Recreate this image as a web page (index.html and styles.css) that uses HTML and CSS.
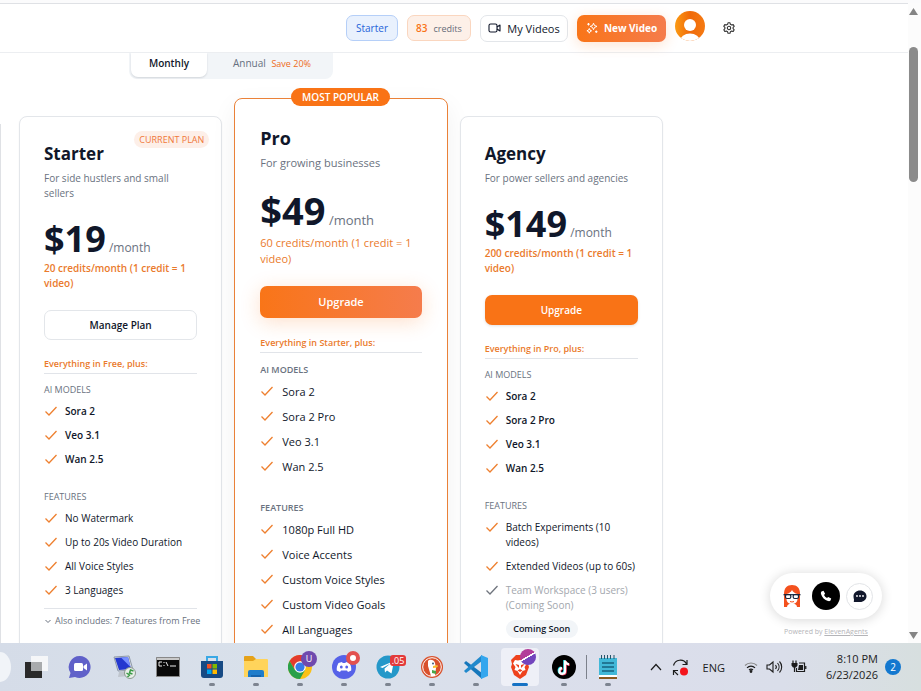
FILE: index.html
```html
<!DOCTYPE html>
<html lang="en">
<head>
<meta charset="utf-8">
<meta name="viewport" content="width=device-width, initial-scale=1">
<title>Plans</title>
<link rel="stylesheet" href="styles.css">
</head>
<body>
<svg class="defs" aria-hidden="true">
  <symbol id="check" viewBox="0 0 14 14"><path d="M1.5 7.5 5 11 12.5 3" fill="none" stroke="currentColor" stroke-width="1.3"/></symbol>
</svg>
<div class="screen">
  <div class="page">
    <div class="view">
      <header class="header">
        <nav class="header-inner">
          <a class="pill pill-plan" href="#">Starter</a>
          <span class="pill pill-credits"><b>83</b> <small>credits</small></span>
          <button class="btn btn-videos" type="button">
            <svg width="13" height="12" viewBox="0 0 13 12" fill="none" stroke="currentColor" stroke-width="1.1" stroke-linejoin="round"><rect x="1" y="2" width="8" height="8" rx="1.6"/><path d="M9 5l3-2v6L9 7"/></svg>
            My Videos</button>
          <button class="btn btn-new" type="button">
            <svg width="12" height="12" viewBox="0 0 12 12" fill="none" stroke="currentColor" stroke-width="1" stroke-linejoin="round"><path d="M7.5 1.2l1 2.3 2.500.9-2.500 1-1 2.300-1-2.300-2.300-1 2.300-.9zM3.300 6.500l.7 1.600 1.600.7-1.600.7-.7 1.700-.7-1.700-1.700-.7 1.700-.7zM2.500 1v2.500M1.200 2.200h2.600M10.300 8.500v2.500M9 9.700h2.500"/></svg>
            New Video</button>
          <button class="avatar" type="button" aria-label="Account">
            <svg width="30" height="30" viewBox="0 0 30 30"><defs><linearGradient id="av" x1="0" x2="1"><stop offset="0" stop-color="#fb9a12"/><stop offset=".5" stop-color="#f06a0a"/><stop offset="1" stop-color="#f57a12"/></linearGradient><clipPath id="ac"><circle cx="15" cy="15" r="15"/></clipPath></defs><g clip-path="url(#ac)"><path fill="url(#av)" d="M0 0h30v30H0z"/><circle cx="15" cy="14" r="6" fill="#fff"/><ellipse cx="15" cy="30" rx="10" ry="7.500" fill="#fff"/></g></svg>
          </button>
          <button class="gear" type="button" aria-label="Settings">
            <svg width="12" height="12" viewBox="0 0 12 12" fill="none" stroke="currentColor" stroke-width="1.100" stroke-linejoin="round"><path d="M5 .8h2l.4 1.500 1.300.7 1.500-.4 1 1.700L10.100 5.400v1.300l1.100 1.100-1 1.700-1.500-.4-1.300.7L7 11.300H5l-.4-1.500-1.300-.7-1.500.4-1-1.700 1.100-1.100V5.400L.8 4.300l1-1.700 1.500.4 1.300-.7z"/><circle cx="6" cy="6" r="1.700"/></svg>
          </button>
        </nav>
      </header>

      <main class="content">
        <div class="cycle">
          <button class="cycle-btn cycle-on" type="button">Monthly</button>
          <button class="cycle-btn" type="button">Annual <small>Save 20%</small></button>
        </div>

        <div class="plans">
          <section class="card">
            <span class="current">CURRENT PLAN</span>
            <h2>Starter</h2>
            <p class="desc">For side hustlers and small<br>sellers</p>
            <p class="price"><strong>$19</strong> /month</p>
            <p class="credits">20 credits/month (1 credit = 1<br>video)</p>
            <button class="cta cta-plain" type="button">Manage Plan</button>
            <p class="inherits">Everything in Free, plus:</p>
            <h3>AI MODELS</h3>
            <ul class="models">
              <li><svg><use href="#check"/></svg>Sora 2</li>
              <li><svg><use href="#check"/></svg>Veo 3.1</li>
              <li><svg><use href="#check"/></svg>Wan 2.5</li>
            </ul>
            <h3>FEATURES</h3>
            <ul>
              <li><svg><use href="#check"/></svg>No Watermark</li>
              <li><svg><use href="#check"/></svg>Up to 20s Video Duration</li>
              <li><svg><use href="#check"/></svg>All Voice Styles</li>
              <li><svg><use href="#check"/></svg>3 Languages</li>
            </ul>
            <button class="also" type="button"><svg width="8" height="8" viewBox="0 0 8 8"><path d="M1.500 3 4 5.500 6.500 3" fill="none" stroke="currentColor"/></svg>Also includes: 7 features from Free</button>
          </section>

          <section class="card card-pro">
            <span class="popular">MOST POPULAR</span>
            <h2>Pro</h2>
            <p class="desc">For growing businesses</p>
            <p class="price"><strong>$49</strong> /month</p>
            <p class="credits">60 credits/month (1 credit = 1<br>video)</p>
            <button class="cta cta-glow" type="button">Upgrade</button>
            <p class="inherits">Everything in Starter, plus:</p>
            <h3>AI MODELS</h3>
            <ul class="models">
              <li><svg><use href="#check"/></svg>Sora 2</li>
              <li><svg><use href="#check"/></svg>Sora 2 Pro</li>
              <li><svg><use href="#check"/></svg>Veo 3.1</li>
              <li><svg><use href="#check"/></svg>Wan 2.5</li>
            </ul>
            <h3>FEATURES</h3>
            <ul>
              <li><svg><use href="#check"/></svg>1080p Full HD</li>
              <li><svg><use href="#check"/></svg>Voice Accents</li>
              <li><svg><use href="#check"/></svg>Custom Voice Styles</li>
              <li><svg><use href="#check"/></svg>Custom Video Goals</li>
              <li><svg><use href="#check"/></svg>All Languages</li>
            </ul>
          </section>

          <section class="card">
            <h2>Agency</h2>
            <p class="desc">For power sellers and agencies</p>
            <p class="price"><strong>$149</strong> /month</p>
            <p class="credits">200 credits/month (1 credit = 1<br>video)</p>
            <button class="cta" type="button">Upgrade</button>
            <p class="inherits">Everything in Pro, plus:</p>
            <h3>AI MODELS</h3>
            <ul class="models">
              <li><svg><use href="#check"/></svg>Sora 2</li>
              <li><svg><use href="#check"/></svg>Sora 2 Pro</li>
              <li><svg><use href="#check"/></svg>Veo 3.1</li>
              <li><svg><use href="#check"/></svg>Wan 2.5</li>
            </ul>
            <h3>FEATURES</h3>
            <ul>
              <li><svg><use href="#check"/></svg><span>Batch Experiments (10<br>videos)</span></li>
              <li><svg><use href="#check"/></svg>Extended Videos (up to 60s)</li>
              <li class="soon"><svg><use href="#check"/></svg><span>Team Workspace (3 users)<br>(Coming Soon)<em>Coming Soon</em></span></li>
            </ul>
          </section>
        </div>
      </main>

      <aside class="widget">
        <div class="widget-bar">
          <svg width="24" height="24" viewBox="0 0 24 24"><path fill="#f4511e" d="M4 23V10C4 4 7 1 12 1s8 3 8 9v13z"/><path fill="#fff" d="M6.500 10c2.500-.5 4.500-2 5.500-4 1 2 3 3.500 5.500 4v5c0 3-2.500 5-5.500 5s-5.500-2-5.500-5zM7 23c0-2 2-3.500 5-3.500s5 1.500 5 3.500z"/><g fill="#fff" stroke="#15233a" stroke-width="1.200"><rect x="5.500" y="10.500" width="5.300" height="4" rx="1.500"/><rect x="13.200" y="10.500" width="5.300" height="4" rx="1.500"/></g><path d="M3.500 10.700h17" stroke="#15233a" stroke-width="1.200"/><path d="M10 17.500q2 1 4 0" fill="none" stroke="#f4511e"/></svg>
          <button class="call" type="button" aria-label="Call"><svg width="12" height="12" viewBox="0 0 12 12"><path fill="#fff" d="M1.500 1.500 3.500.8l1.600 3L4 5c.6 1.300 1.600 2.300 3 3l1.200-1.100 3 1.600-.7 2c-.5.6-1.500.8-2.500.5C4.600 10.200 1.900 7.300 1 4c-.2-1 0-2 .5-2.500z"/></svg></button>
          <button class="chat" type="button" aria-label="Chat"><svg width="14" height="13" viewBox="0 0 14 13"><path fill="#11172b" d="M7 .5c3.700 0 6.500 2.500 6.500 5.700S10.700 12 7 12H.8l.2-2.500C.7 8.500.5 7.600.5 6.200.5 3 3.300.5 7 .5z"/><g fill="#fff"><circle cx="4" cy="6" r=".9"/><circle cx="7" cy="6" r=".9"/><circle cx="10" cy="6" r=".9"/></g></svg></button>
        </div>
        <p>Powered by <a href="#">ElevenAgents</a></p>
      </aside>
    </div>
    <div class="scroll" aria-hidden="true">
      <svg width="9" height="7" viewBox="0 0 9 7"><path d="M4.500 0 9 7H0z"/></svg>
      <div class="thumb"></div>
      <svg class="down" width="9" height="7" viewBox="0 0 9 7"><path d="M4.500 7 9 0H0z"/></svg>
    </div>
  </div>

  <footer class="taskbar">
    <span class="search"></span>
    <div class="apps">
      <button type="button" aria-label="Task view"><svg viewBox="0 0 24 24"><path fill="#f5f6f8" d="M7 1h17v15H7z"/><path fill="#2a2a2a" d="M1 7h17v16H1z"/><path fill="#a9abad" d="M7 7h11v9H7z"/></svg></button>
      <button type="button" aria-label="Chat"><svg viewBox="0 0 24 24"><path fill="#6061c9" d="M12 1a11 11 0 1 1-5 21l-6 1 1.500-5A11 11 0 0 1 12 1z"/><rect x="6" y="8" width="9" height="8" rx="1.500" fill="#fff"/><path fill="#fff" d="m15.500 11 3.500-2.500v7L15.500 13z"/></svg></button>
      <button type="button" aria-label="Remote desktop"><svg viewBox="0 0 24 24"><path fill="#d5d9de" stroke="#8e99a8" d="m2 2 15-1 4 14-15 1z"/><path fill="#2438cf" d="m3 3 13-1 3 12-12 1z"/><path fill="#7890ff" d="m9 2.500 7-.5 2.500 10z"/><path fill="#bfc5cd" d="m7 17 7-1 3 5-11 1z"/><circle cx="18" cy="18" r="5.500" fill="#e8eee9" stroke="#8c9a90"/><path d="m14.500 18 3 2-2 2M21.500 16l-3-1-1 3 3 1" fill="none" stroke="#3a9a45" stroke-width="1.500"/></svg></button>
      <button type="button" aria-label="Command prompt"><svg viewBox="0 0 24 24"><path fill="#090909" stroke="#888" d="M.5 2.500h23v19H.5z"/><path fill="#c9c9c9" d="M1 3h22v2H1z"/><path d="M6 7H3v4h3M8 7v1M8 10v1M10 7l2 4M14 11h6" stroke="#eee" fill="none"/></svg></button>
      <button class="open" type="button" aria-label="Store"><svg viewBox="0 0 24 24"><path d="M7 7V2h10v5" fill="none" stroke="#39a8e5" stroke-width="2"/><path fill="#174a84" d="M1 6h22v14q0 3-3 3H4q-3 0-3-3z"/><path fill="#f25022" d="M7 9h4.500v4.500H7z"/><path fill="#7fba00" d="M12.500 9H17v4.500h-4.500z"/><path fill="#00a4ef" d="M7 14.500h4.500V19H7z"/><path fill="#ffb900" d="M12.500 14.500H17V19h-4.500z"/></svg></button>
      <button class="open" type="button" aria-label="Files"><svg viewBox="0 0 24 24"><path fill="#e5a219" d="M0 2q0-1 1-1h8l3 3v5H0z"/><path fill="#ffd45b" d="M0 6h9l3-2h11q1 0 1 1v17H0z"/><path fill="#1f7dcb" d="M4 22v-5q0-2 2-2h12q2 0 2 2v5z"/><path fill="#1764ad" d="M7 20h10v2H7z"/></svg></button>
      <button class="open" type="button" aria-label="Chrome"><svg viewBox="0 0 24 24"><circle cx="12" cy="12" r="12" fill="#fbc116"/><path fill="#e33b2e" d="M1.600 6A12 12 0 0 1 22.400 6H12L7 15z"/><path fill="#29a04a" d="M1.600 6A12 12 0 0 0 12 24l5-9-10 0z"/><circle cx="12" cy="12" r="5.800" fill="#fff"/><circle cx="12" cy="12" r="4.600" fill="#377be8"/></svg><i class="badge badge-u">U</i></button>
      <button class="open" type="button" aria-label="Discord"><svg viewBox="0 0 24 24"><circle cx="12" cy="12" r="12" fill="#5662e8"/><path fill="#fff" d="M6.500 8 10 7l.7 1h2.600L14 7l3.500 1c1.500 2.500 2 5 1.700 7.500L16 17l-1-1.500H9L8 17l-3.200-1.500C4.500 13 5 10.500 6.500 8z"/><ellipse cx="9.300" cy="12" rx="1.400" ry="1.600" fill="#5662e8"/><ellipse cx="14.700" cy="12" rx="1.400" ry="1.600" fill="#5662e8"/></svg><i class="badge badge-dot"></i></button>
      <button class="open" type="button" aria-label="Telegram"><svg viewBox="0 0 24 24"><circle cx="12" cy="12" r="11.500" fill="#2598c9"/><path fill="#fff" d="m4 12 14-6-2.500 12.500-4.500-3-2 2-.5-4 6-5-8 4.500z"/></svg><i class="badge badge-count">.05</i></button>
      <button class="open" type="button" aria-label="DuckDuckGo"><svg viewBox="0 0 24 24"><circle cx="12" cy="12" r="11" fill="#d9512c"/><circle cx="12" cy="12" r="9.300" fill="none" stroke="#fff"/><path fill="#fff" d="M8 6c1-2 6-2 7 2l1 5-1 8h-4L8 11z"/><path fill="#f8bd2e" d="M13 11c3-1 5-1 5 0s-2 2-5 2z"/><path fill="#4ba64a" d="m12 15 4 1v3l-4-1z"/><circle cx="13" cy="8.500" r=".9" fill="#2b4b6b"/></svg></button>
      <button class="open" type="button" aria-label="Code"><svg viewBox="0 0 24 24"><path fill="#1677bb" d="M0 8 2 6l16 12v6L1 9z"/><path fill="#2189cc" d="m0 16 2 2L18 6V0L1 15z"/><path fill="#34a6ee" d="m17 0 7 3v18l-7 3z"/></svg></button>
      <button class="open active" type="button" aria-label="Brave"><svg viewBox="0 0 24 24"><path fill="#ee421d" d="m5 3 3-3h8l3 3 2 2-1 4 1 3-3 8-6 4-6-4-3-8 1-3-1-4z"/><path fill="#fff" d="m7 5 3 .5L12 5l2 .5L17 5l2 3.500-2.500 3.500 1 3-3 1-2.500 4-2.500-4-3-1 1-3L5 8.500z"/><path fill="#ee421d" d="m7.500 9 3.500 1v3l-2-2zM16.500 9 13 10v3l2-2zM9.500 15.500l2.500-1.500 2.500 1.500L12 17z"/></svg><i class="badge badge-brave"></i></button>
      <button class="open" type="button" aria-label="TikTok"><svg viewBox="0 0 24 24"><circle cx="12" cy="12" r="12" fill="#000"/><g fill="none" stroke-width="2.200"><path stroke="#25dfe5" d="M12.300 5v10.500a2.800 2.800 0 1 1-3-2.800M12.300 5.500c.5 2 2 3 4 3.300"/><path stroke="#f5365c" d="M13.700 6v10.500a2.800 2.800 0 1 1-3-2.800M13.700 6.500c.5 2 2 3 4 3.300"/><path stroke="#fff" d="M13 5.500V16a2.800 2.800 0 1 1-3-2.800M13 6c.5 2 2 3 4 3.300"/></g></svg></button>
      <button class="open divided" type="button" aria-label="Notepad"><svg viewBox="0 0 24 24"><path fill="#42b8d8" d="M3 3h18v18H3z"/><path fill="#fff" d="M3 20h18v2H3z"/><path fill="#8a5a20" d="M3 22h18v2H3z"/><path d="M6 8h12M6 12h12M6 16h12" stroke="#17627f" stroke-width="1.500"/><path d="M5.500 0v4M8.500 0v4M11.500 0v4M14.500 0v4M18 0v4" stroke="#27576b"/></svg></button>
    </div>
    <div class="tray">
      <svg width="12" height="8" viewBox="0 0 12 8" fill="none" stroke="#1c1c1c" stroke-width="1.200"><path d="M1 7l5-5.500L11 7"/></svg>
      <svg class="sync" width="17" height="17" viewBox="0 0 17 17" fill="none" stroke="#1c1c1c" stroke-width="1.200"><path d="M1.500 6.500A7 7 0 0 1 14.500 5M15 1v4.500h-4.500M1.500 16v-4.500H6M1.800 11.800 6 16"/><circle cx="12" cy="12.500" r="4" fill="#f4141c" stroke="none"/></svg>
      <span class="lang">ENG</span>
      <svg class="wifi" width="14" height="12" viewBox="0 0 14 12" fill="none" stroke="#1c1c1c" stroke-width="1.200"><path d="M1 4.500a8.500 8.500 0 0 1 12 0" stroke="#888"/><path d="M3 6.800a5.600 5.600 0 0 1 8 0M5 9a2.900 2.900 0 0 1 4 0"/><circle cx="7" cy="10.500" r=".8" fill="#1c1c1c"/></svg>
      <svg class="sound" width="17" height="14" viewBox="0 0 17 14" fill="none" stroke="#1c1c1c" stroke-width="1.100"><path d="M1 5h2.500L7 2v10L3.500 9H1zM9.500 5a3 3 0 0 1 0 4M11.500 3a6 6 0 0 1 0 8M13.500 1.500a8 8 0 0 1 0 11"/></svg>
      <svg width="16" height="14" viewBox="0 0 16 14" fill="none" stroke="#1c1c1c" stroke-width="1.200"><path d="M8 3h5.500v8.500h-8V8M14.800 6v3"/><path fill="#1c1c1c" stroke="none" d="M8 5h4v5H7zM.5 3h6v2.500L5 7.500H2L.5 5.500z"/><path d="M2 3V.5M5 3V.5M3.500 7v5"/></svg>
      <time>8:10 PM<br>6/23/2026</time>
      <span class="count">2</span>
    </div>
  </footer>
</div>
</body>
</html>
```
FILE: styles.css
```css
* { box-sizing: border-box; }
body {
  margin: 0;
  font-family: "Open Sans", "Noto Sans", sans-serif;
  font-size: 10px;
  line-height: 15px;
  color: #10172a;
  background: #fff;
}
h2, h3, p, ul { margin: 0; padding: 0; }
ul { list-style: none; }
button { font: inherit; color: inherit; border: 0; background: none; padding: 0; }
svg { display: block; flex: none; }
.defs { position: absolute; width: 0; height: 0; }

.screen { display: flex; flex-direction: column; height: 100vh; overflow: hidden; }
.page { flex: 1; min-height: 0; display: flex; border-top: 3px solid #fbfbfc; }
.view { flex: 1; min-width: 0; position: relative; overflow: hidden; border-top: 1px solid #dfe1e5; }

/* header */
.header { border-bottom: 1px solid #eceef1; height: 49px; position: relative; background: #fff; }
.header-inner { display: flex; align-items: center; justify-content: flex-end; gap: 9px; max-width: 738px; height: 48px; }
.pill { display: flex; align-items: center; justify-content: center; gap: 6px; height: 26px; border: 1px solid; border-radius: 7px; }
.pill-plan { width: 52px; color: #2563d9; background: #e9f1fd; border-color: #b5cff8; text-decoration: none; }
.pill-credits { width: 64px; background: #fdf0e8; border-color: #fad6bf; }
.pill b { font-weight: 600; color: #f97316; }
.pill small { font-size: 9px; color: #666c78; }
.btn { display: flex; align-items: center; justify-content: center; gap: 6px; height: 27px; border-radius: 7px; }
.btn-videos { width: 88px; border: 1px solid #e3e6ea; font-size: 11px; }
.btn-new { width: 89px; color: #fff; font-weight: 700; background: linear-gradient(90deg, #f97518, #f57c4c); box-shadow: 0 3px 14px rgba(249, 115, 22, .2); }
.avatar { margin-top: -4px; border-radius: 50%; }
.gear { margin-left: 6px; padding: 0 3px; color: #333; }

/* billing cycle */
.content { padding: 0 19px; }
.cycle { display: flex; width: 204px; height: 26px; margin-left: 110px; padding: 0 2px 2px; background: #f2f5f8; border-radius: 0 0 8px 8px; }
.cycle-btn { flex: 1; height: 24px; padding: 0 0 4px 6px; color: #667080; }
.cycle-btn small { margin-left: 3px; font-size: 9px; color: #ee6c22; }
.cycle-on { flex: none; width: 76px; padding-left: 0; background: #fff; color: #10172a; font-weight: 600; border-radius: 0 0 7px 7px; box-shadow: 0 1px 2px rgba(16, 23, 42, .14); }

/* plans */
.plans { display: grid; grid-template-columns: minmax(0, 203fr) minmax(0, 213fr) minmax(0, 203fr); gap: 12px; max-width: 644px; margin-top: 19px; align-items: start; }
.plans::before { content: ""; position: absolute; left: 0; top: 120px; width: 1px; height: 100%; background: #dfe1e5; }
.card { position: relative; min-height: 640px; margin-top: 18px; padding: 24px; background: #fff; border: 1px solid #e3e6ea; border-radius: 8px; box-shadow: 0 1px 2px rgba(16, 23, 42, .05); }
.card-pro { margin-top: 0; padding: 25px; border-color: #ea8138; font-size: 11px; line-height: 16px; box-shadow: 0 8px 26px rgba(16, 23, 42, .06); }
.current { position: absolute; top: 14px; right: 12px; padding: 1px 5px; border-radius: 9px; background: #fdefe8; color: #f0783a; font-size: 9px; }
.popular { position: absolute; top: -11px; left: 56px; right: 57px; height: 18px; line-height: 18px; text-align: center; border-radius: 9px; background: #f97316; color: #fff; font-size: 10px; font-weight: 600; }
h2 { font-size: 17px; line-height: 26px; font-weight: 700; }
.card-pro h2 { font-size: 18px; line-height: 28px; }
.desc { margin-top: 4px; color: #6a7280; }
.price { margin-top: 18px; height: 40px; font-size: 12px; color: #6a7280; white-space: nowrap; }
.price strong { font-size: 36px; line-height: 40px; color: #10172a; }
.credits { margin-top: 2px; color: #ea7a2c; font-weight: 600; }
.cta { display: block; width: 100%; height: 30px; margin-top: 19px; border-radius: 7px; background: #f97316; color: #fff; font-weight: 600; box-shadow: 0 1px 3px rgba(16, 23, 42, .12); }
.cta-plain { background: #fff; border: 1px solid #e3e6ea; color: #10172a; box-shadow: none; }
.cta-glow { height: 32px; background: linear-gradient(90deg, #f97518, #f57c4c); box-shadow: 0 4px 20px rgba(249, 115, 22, .22); }
.inherits { margin-top: 17px; padding-bottom: 2px; border-bottom: 1px solid #e1e4e9; color: #ea7a2c; font-size: 9px; line-height: 14px; font-weight: 600; }
h3 { margin-top: 23px; font-size: 9px; line-height: 13px; font-weight: 500; color: #6a7280; }
.inherits + h3 { margin-top: 9px; }
ul { display: grid; gap: 9px; margin-top: 8px; }
li { display: flex; gap: 7px; }
li svg { width: 14px; height: 14px; color: #ee8030; }
.models { font-weight: 600; }
.also { display: flex; align-items: center; gap: 3px; width: 100%; margin-top: 10px; padding-top: 5px; border-top: 1px solid #e1e4e9; font-size: 9px; line-height: 14px; color: #6a7280; white-space: nowrap; }
.soon { color: #a3a7ae; }
.soon svg { color: #70757e; }
.soon em { display: block; width: 72px; height: 18px; margin-top: 7px; line-height: 18px; text-align: center; border-radius: 9px; background: #f2f5f8; color: #10172a; font-size: 9px; font-style: normal; font-weight: 600; }
.card-pro .desc { margin-top: 3px; }
.card-pro .price { height: 42px; font-size: 13px; }
.card-pro .price strong { font-size: 38px; line-height: 42px; }
.card-pro .credits { margin-top: 4px; font-weight: 500; }
.card-pro .inherits { margin-top: 18px; }
.card-pro h3 { margin-top: 26px; line-height: 14px; font-weight: 600; }
.card-pro .inherits + h3 { margin-top: 10px; }
.card-pro ul { margin-top: 7px; }
.card-pro li { gap: 8px; }
.card-pro .models { font-weight: 500; }

/* voice widget */
.widget { position: absolute; right: 26px; bottom: 5px; text-align: center; }
.widget-bar { display: flex; align-items: center; gap: 8px; height: 46px; padding: 0 9px 0 10px; border-radius: 23px; background: #fff; box-shadow: 0 1px 12px rgba(0, 0, 0, .16); }
.call, .chat { display: grid; place-items: center; border-radius: 50%; }
.call { width: 28px; height: 28px; background: #000; }
.chat { width: 27px; height: 27px; border: 1px solid #e2e4e7; margin-left: -2px; }
.widget p { margin-top: 6px; padding-right: 0; font-size: 7px; line-height: 13px; color: #b4b4b8; }
.widget a { color: inherit; }

.scroll { display: flex; flex-direction: column; align-items: center; width: 13px; padding: 5px 2px 4px 0; background: #fcfcfc; fill: #858585; }
.thumb { width: 9px; height: 135px; margin-top: 32px; border-radius: 5px; background: #8b8b8b; }
.down { margin-top: auto; }

/* taskbar */
.taskbar { display: flex; flex: none; height: 48px; background: linear-gradient(90deg, #d5dce8, #d9e1eb 30%, #dbdeeb 70%, #dadeea 85%, #d7dfdf); font-size: 11px; }
.search { width: 11px; height: 30px; margin: 9px 3px 0 0; border-radius: 0 11px 11px 0 / 0 15px 15px 0; background: #f1f4f8; }
.apps { display: flex; }
.apps button { position: relative; display: grid; place-items: center; width: 44px; height: 48px; }
.apps svg { width: 24px; height: 24px; }
.open::after { content: ""; position: absolute; bottom: 5px; left: 19px; width: 6px; height: 3px; border-radius: 2px; background: #7d8490; }
.active::before { content: ""; position: absolute; inset: 5px 3px; border-radius: 4px; background: #eef0f7; }
.active svg { position: relative; }
.active::after { left: 14px; width: 16px; background: #1672c4; }
.divided::before { content: ""; position: absolute; left: 0; top: 12px; width: 1px; height: 24px; background: #7c818b; }
.badge { position: absolute; top: 8px; right: 6px; font-style: normal; color: #fff; }
.badge-u { right: 5px; width: 16px; height: 16px; line-height: 16px; border-radius: 50%; background: #704aae; font-size: 9px; }
.badge-dot { width: 14px; height: 14px; border-radius: 50%; border: 4px solid #e3504f; background: #fff; }
.badge-count { top: 12px; right: 4px; width: 16px; height: 11px; line-height: 11px; border-radius: 3px; background: #e33a3a; font-size: 9px; }
.badge-brave { top: 6px; right: 6px; width: 16px; height: 16px; border-radius: 50%; background: linear-gradient(150deg, #b23c9a 45%, #fff 46% 52%, #7345bd 53%); }
.tray { display: flex; align-items: center; margin-left: auto; padding-right: 20px; color: #1c1c1c; }
.sync { margin-left: 10px; }
.lang { margin-left: 14px; }
.wifi { margin-left: 19px; }
.sound { margin: 0 8px; }
.tray time { width: 62px; margin-left: 9px; text-align: right; line-height: 16px; }
.count { width: 16px; height: 16px; margin-left: 7px; line-height: 16px; text-align: center; border-radius: 50%; background: #1378cf; color: #fff; font-size: 10px; }
```
